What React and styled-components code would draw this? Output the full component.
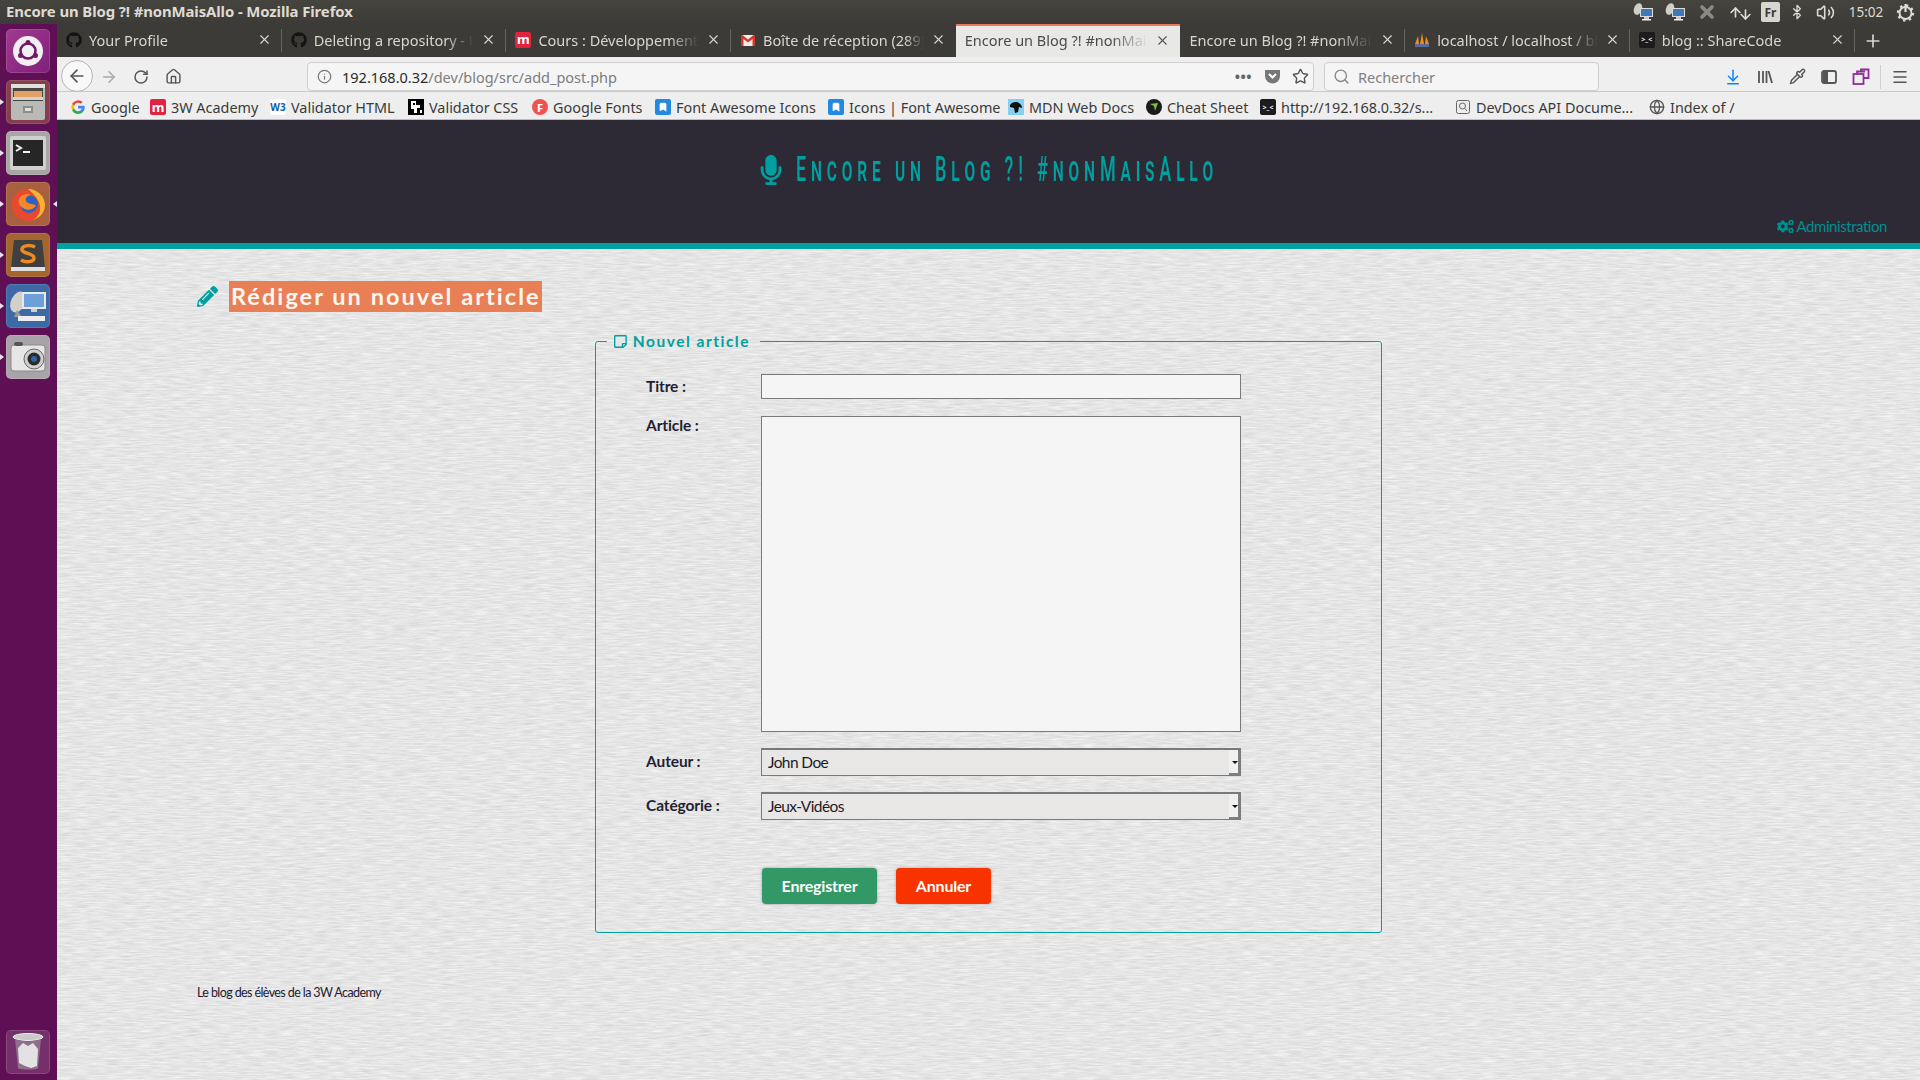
import React from "react";
import styled, { createGlobalStyle } from "styled-components";
import { FaGithub, FaMicrophone, FaPencilAlt, FaCogs, FaRegStickyNote } from "react-icons/fa";
import {
  ArrowLeft, ArrowRight, RotateCw, Home, Info, Star, Search, ArrowDownToLine, Pipette,
  Menu, Bluetooth, Volume2, X, Plus, Globe, ArrowUp, ArrowDown, Bookmark,
} from "lucide-react";

const UI = '"Noto Sans", "Open Sans", sans-serif';
const BODY = 'Lato, Roboto, sans-serif';

const paper =
  "data:image/svg+xml," +
  encodeURIComponent(
    `<svg xmlns='http://www.w3.org/2000/svg' width='512' height='512'><filter id='p' x='0' y='0' width='100%' height='100%' color-interpolation-filters='sRGB'><feTurbulence type='fractalNoise' baseFrequency='0.0625 0.7' numOctaves='3' stitchTiles='stitch'/><feColorMatrix values='0.16 0 0 0 0.82 0.16 0 0 0 0.82 0.16 0 0 0 0.82 0 0 0 0 1'/></filter><rect width='512' height='512' filter='url(#p)'/></svg>`
  );

const Global = createGlobalStyle`
  html, body { margin: 0; padding: 0; height: 100%; overflow: hidden; }
  body { font-family: ${UI}; background: #e6e6e6; }
  * { box-sizing: border-box; }
`;

const Screen = styled.div`
  width: 1920px;
  height: 1080px;
  display: flex;
  flex-direction: column;
  overflow: hidden;
`;

const TitleBar = styled.div`
  height: 24px;
  flex: none;
  display: flex;
  align-items: center;
  padding: 0 5px 0 6px;
  background: linear-gradient(#45443f, #3c3b37);
  color: #dfdbd2;
`;
const WindowTitle = styled.div`
  flex: 1;
  font-size: 14.9px;
  font-weight: 700;
  letter-spacing: -0.1px;
  white-space: nowrap;
  padding-bottom: 2px;
`;
const Tray = styled.div`
  display: flex;
  align-items: center;
  color: #dfdbd2;
`;
const TraySlot = styled.span`
  display: flex;
  align-items: center;
  justify-content: center;
  width: ${(p) => p.$w}px;
  margin-right: ${(p) => p.$gap || 0}px;
  font-size: 13.5px;
  & svg { flex: none; }
`;
const FrBox = styled.span`
  width: 19px;
  height: 20px;
  background: #d9d6cf;
  color: #3c3b37;
  border-radius: 2px;
  font: 700 12px ${UI};
  display: flex;
  align-items: center;
  justify-content: center;
`;

const Desktop = styled.div`
  flex: 1;
  display: flex;
  min-height: 0;
`;

const Launcher = styled.div`
  width: 57px;
  flex: none;
  background: #5f0f54;
  padding: 5px 0 6px 6px;
  display: flex;
  flex-direction: column;
  gap: 7px;
`;
const LauncherTile = styled.div`
  position: relative;
  width: 44px;
  height: 44px;
  border-radius: 5px;
  background: ${(p) => p.$bg};
  margin-top: ${(p) => (p.$bottom ? "auto" : "0")};
  box-shadow: inset 0 0 0 1px rgba(255, 255, 255, 0.12);
  display: flex;
  align-items: center;
  justify-content: center;
  ${(p) =>
    p.$running &&
    `&::before { content: ""; position: absolute; left: -6px; top: 19px; border: 3px solid transparent; border-left: 4px solid #e6e6e6; }`}
  ${(p) =>
    p.$focused &&
    `&::after { content: ""; position: absolute; right: -7px; top: 19px; border: 3px solid transparent; border-right: 4px solid #e6e6e6; }`}
`;

const Browser = styled.div`
  flex: 1;
  min-width: 0;
  display: flex;
  flex-direction: column;
`;

const TabStrip = styled.div`
  height: 33px;
  flex: none;
  display: flex;
  background: #3c3b37;
`;
const Tab = styled.div`
  flex: 0 0 224.7px;
  min-width: 0;
  height: 33px;
  display: flex;
  align-items: center;
  gap: 7px;
  padding: 0 10px ${(p) => (p.$active ? "3px" : "2px")} 9px;
  font-size: 14.5px;
  color: ${(p) => (p.$active ? "#4b4b4b" : "#d8d6cd")};
  background: ${(p) => (p.$active ? "#e8e8e7" : "transparent")};
  border-top: ${(p) => (p.$active ? "2px solid #e87b52" : "none")};
  position: relative;
  & > svg { flex: none; }
  ${(p) =>
    !p.$active &&
    !p.$noLine &&
    `&::after { content: ""; position: absolute; right: 0; top: 5px; bottom: 5px; width: 1px; background: #66655f; }`}
`;
const TabLabel = styled.span`
  flex: 1;
  min-width: 0;
  white-space: nowrap;
  overflow: hidden;
  -webkit-mask-image: linear-gradient(90deg, #000 ${(p) => p.$fade}%, transparent 100%);
  mask-image: linear-gradient(90deg, #000 ${(p) => p.$fade}%, transparent 100%);
`;
const TabClose = styled.span`
  display: flex;
  flex: none;
  color: ${(p) => (p.$active ? "#555" : "#d8d6cd")};
`;
const NewTab = styled.div`
  width: 36px;
  flex: none;
  display: flex;
  align-items: center;
  justify-content: center;
  color: #d8d6cd;
`;

const NavBar = styled.div`
  height: 35px;
  flex: none;
  display: flex;
  align-items: center;
  padding-top: 5px;
  background: #efefef;
  border-bottom: 1px solid #c9c9c9;
  color: #555;
`;
const BackCircle = styled.div`
  width: 32px;
  height: 32px;
  border-radius: 50%;
  margin-left: 4px;
  margin-top: -2px;
  border: 1px solid #b4b4b4;
  background: #f8f8f8;
  display: flex;
  align-items: center;
  justify-content: center;
  flex: none;
`;
const NavSlot = styled.div`
  width: 32px;
  flex: none;
  display: flex;
  justify-content: center;
  color: ${(p) => p.$color || "#555"};
`;
const UrlBox = styled.div`
  width: 1007px;
  height: 29px;
  margin-left: 118px;
  background: #f5f5f5;
  border: 1px solid #cfcfcf;
  border-radius: 4px;
  display: flex;
  align-items: center;
  padding: 0 4px 0 9px;
  flex: none;
  font-size: 14.5px;
`;
const UrlHost = styled.span`
  color: #2b2b2b;
  margin-left: 10px;
`;
const UrlPath = styled.span`
  color: #7d7d7d;
  flex: 1;
`;
const Dots = styled.span`
  color: #666;
  font-weight: 700;
  font-size: 14px;
  letter-spacing: 0.5px;
  margin-right: 12px;
  line-height: 1;
`;
const SearchBox = styled.div`
  width: 275px;
  height: 29px;
  margin-left: 10px;
  background: #f5f5f5;
  border: 1px solid #cfcfcf;
  border-radius: 4px;
  display: flex;
  align-items: center;
  gap: 8px;
  padding: 0 8px;
  flex: none;
  font-size: 14.5px;
  color: #808080;
`;
const ToolGroup = styled.div`
  margin-left: 118px;
  display: flex;
  align-items: center;
  flex: none;
`;
const ToolDivider = styled.div`
  width: 1px;
  height: 24px;
  background: #cfcfcf;
  margin: 0 3px 0 3px;
`;

const Bookmarks = styled.div`
  height: 28px;
  flex: none;
  display: flex;
  align-items: center;
  padding: 3px 0 0 13px;
  background: #eeeeee;
  border-bottom: 1px solid #bdbdbd;
  font-size: 14.4px;
  color: #3a3a3a;
`;
const BookmarkItem = styled.div`
  width: ${(p) => p.$w}px;
  flex: none;
  display: flex;
  align-items: center;
  gap: 5px;
  white-space: nowrap;
`;
const FavTile = styled.span`
  width: 16px;
  height: 16px;
  flex: none;
  display: flex;
  align-items: center;
  justify-content: center;
  background: ${(p) => p.$bg || "transparent"};
  color: ${(p) => p.$fg || "#fff"};
  border-radius: ${(p) => (p.$round ? "50%" : "2px")};
  font: 700 ${(p) => p.$size || 11}px/1 ${UI};
  overflow: hidden;
`;

const Page = styled.div`
  flex: 1;
  min-height: 0;
  display: flex;
  flex-direction: column;
  background-color: #e6e6e6;
  background-image: url("${paper}");
`;
const Header = styled.header`
  height: 129px;
  flex: none;
  background: #2d2a35;
  border-bottom: 6px solid #00a0a0;
  display: flex;
  flex-direction: column;
`;
const SiteTitle = styled.h1`
  margin: 32px 0 0;
  height: 36px;
  display: flex;
  align-items: center;
  justify-content: center;
  gap: 10px;
  padding-right: 4px;
  color: #00a0a0;
  white-space: nowrap;
  font-weight: 400;
`;
const SiteTitleText = styled.span`
  display: inline-block;
  width: 422px;
  font: 500 35px/36px Roboto, sans-serif;
  font-variant: small-caps;
  letter-spacing: 9.4px;
  transform: scaleX(0.515);
  transform-origin: left center;
`;
const AdminLink = styled.a`
  margin-top: auto;
  margin-bottom: 7px;
  align-self: flex-end;
  margin-right: 33px;
  display: flex;
  align-items: center;
  gap: 3px;
  font: 400 15px/20px ${BODY};
  letter-spacing: -0.45px;
  color: #008f8f;
`;

const Content = styled.main`
  flex: 1;
  padding: 32px 0 0 140px;
`;
const Heading = styled.h2`
  margin: 0;
  height: 31px;
  display: flex;
  align-items: center;
  gap: 11px;
  color: #00a0a0;
  font-weight: 400;
`;
const HeadingMark = styled.span`
  background: #e97f55;
  color: #fbf6f0;
  height: 31px;
  width: 313px;
  padding-left: 2px;
  font: 700 23.5px/30px ${BODY};
  letter-spacing: 2.05px;
  white-space: nowrap;
  overflow: hidden;
`;
const PostFieldset = styled.fieldset`
  width: 787px;
  height: 602px;
  margin: 19px 0 0 398px;
  padding: 23px 0 0 50px;
  border: 1px solid #00a0a0;
  border-radius: 3px;
  min-width: 0;
`;
const PostLegend = styled.legend`
  margin-left: -39px;
  padding: 0 10px 0 7px;
  height: 20px;
  width: 153px;
  display: flex;
  align-items: center;
  gap: 6px;
  color: #00a0a0;
  font: 700 15.5px/20px ${BODY};
  letter-spacing: 1.5px;
  white-space: nowrap;
`;
const FormRow = styled.div`
  display: flex;
  align-items: ${(p) => (p.$top ? "flex-start" : "center")};
  margin-top: ${(p) => p.$mt || 0}px;
`;
const FieldLabel = styled.label`
  width: 115px;
  flex: none;
  font: 700 15.5px/22px ${BODY};
  letter-spacing: -0.1px;
  color: #241f33;
  white-space: nowrap;
  padding-bottom: ${(p) => (p.$top ? "0" : "2px")};
  margin-top: ${(p) => (p.$top ? "-2px" : "0")};
`;
const TextInput = styled.input`
  width: 480px;
  height: 25px;
  border: 1px solid #7a7a7a;
  background: #f5f5f5;
  padding: 0 5px;
  outline: none;
`;
const TextArea = styled.textarea`
  width: 480px;
  height: 316px;
  border: 1px solid #7a7a7a;
  background: #f5f5f5;
  padding: 5px;
  outline: none;
  resize: none;
  display: block;
`;
const SelectWrap = styled.div`
  position: relative;
  width: 480px;
  height: 28px;
  &::before {
    content: "";
    position: absolute;
    right: 1px;
    top: 2px;
    bottom: 1px;
    width: 9px;
    background: #f0f0ee;
    border-right: 2px solid #7f7f7f;
    border-bottom: 2px solid #7f7f7f;
  }
  &::after {
    content: "";
    position: absolute;
    right: 3px;
    top: 13px;
    border: 3px solid transparent;
    border-top: 3px solid #111;
    border-bottom: 0;
  }
`;
const SelectField = styled.select`
  width: 100%;
  height: 100%;
  appearance: none;
  border: 1px solid #7a7a7a;
  border-top-width: 2px;
  border-radius: 0;
  background: #e8e7e5;
  padding: 0 0 2px 6px;
  font: 400 15.5px ${BODY};
  letter-spacing: -0.6px;
  color: #1d1b26;
  outline: none;
`;
const ButtonRow = styled.div`
  display: flex;
  gap: 19px;
  margin: 48px 0 0 116px;
`;
const FormButton = styled.button`
  height: 36px;
  width: ${(p) => p.$w}px;
  border: none;
  border-radius: 4px;
  background: ${(p) => p.$bg};
  color: #fdfdfa;
  font: 700 16px ${BODY};
  letter-spacing: -0.2px;
  box-shadow: 0 0 3px rgba(0, 0, 0, 0.3);
  padding: 0 0 2px;
`;
const Footer = styled.footer`
  margin-top: 51px;
  font: 400 12.5px/18px ${BODY};
  letter-spacing: -0.6px;
  color: #1e1a33;
`;

const MTile = () => <FavTile $bg="#e2233f" $size={13}>m</FavTile>;
const FlagTile = () => (
  <FavTile $bg="#2288e0">
    <Bookmark size={10} color="#fff" fill="#fff" />
  </FavTile>
);
const FaceTile = () => (
  <FavTile $bg="#1c1c1c" $size={7}>{">_<"}</FavTile>
);

const Gmail = () => (
  <svg width="16" height="16" viewBox="0 0 16 16">
    <rect x="1" y="3" width="14" height="11" fill="#eee" />
    <path d="M1 3v11h2.5V7L8 10.5 12.5 7v7H15V3h-1.5L8 7.5 2.5 3z" fill="#d5382c" />
  </svg>
);
const Pma = () => (
  <svg width="16" height="16" viewBox="0 0 16 16">
    <path d="M1 12 4 4l1 8zM6 12l2-11 2 11zM11 12 12 4l3 8z" fill="#e89020" />
    <rect x="1" y="12" width="14" height="3" fill="#5a6a9a" />
  </svg>
);
const GoogleG = () => (
  <svg width="16" height="16" viewBox="0 0 24 24">
    <path fill="#4285f4" d="M22 12.2c0-.7-.1-1.400-.2-2H12v4h5.600a4.800 4.800 0 0 1-2.100 3.100v2.600h3.400c2-1.800 3.100-4.500 3.100-7.700z" />
    <path fill="#34a853" d="M12 22.500c2.800 0 5.200-.9 6.900-2.600l-3.400-2.600c-.9.600-2.100 1-3.500 1-2.700 0-5-1.800-5.800-4.300H3.200v2.700A10.500 10.500 0 0 0 12 22.500z" />
    <path fill="#fbbc05" d="M6.200 14a6.300 6.300 0 0 1 0-4V7.300H3.200a10.500 10.500 0 0 0 0 9.400z" />
    <path fill="#ea4335" d="M12 5.700c1.500 0 2.900.5 4 1.600l3-3A10.500 10.500 0 0 0 3.200 7.300L6.200 10C7 7.500 9.300 5.700 12 5.700z" />
  </svg>
);
const QrMark = () => (
  <svg width="16" height="16" viewBox="0 0 16 16">
    <rect width="16" height="16" fill="#000" />
    <path d="M3 2h5v4h4v3H9v5H6v-4H3z" fill="#fff" />
    <rect x="5" y="4" width="2" height="2" />
    <rect x="12" y="11" width="2" height="3" fill="#fff" />
  </svg>
);
const MdnMark = () => (
  <svg width="16" height="16" viewBox="0 0 16 16">
    <rect width="16" height="16" fill="#83d0f2" />
    <path d="M2 6c2-3 6-4 9-2 2 1 3 3 3 5l-3-1-1 5-3 1-1-5-4-1z" fill="#111" />
  </svg>
);
const CheatMark = () => (
  <svg width="16" height="16" viewBox="0 0 16 16">
    <circle cx="8" cy="8" r="8" fill="#1b1b1b" />
    <path d="M4 5l8-1-3 8-1-5z" fill="#7fbf3f" />
  </svg>
);
const DocsMark = () => (
  <svg width="16" height="16" viewBox="0 0 16 16" fill="none" stroke="#666">
    <rect x="1.500" y="1.500" width="13" height="13" rx="2" fill="#eee" />
    <circle cx="7.500" cy="7" r="3" />
    <path d="M10 9.500l2 2.500" />
  </svg>
);
const Monitor = () => (
  <svg width="22" height="20" viewBox="0 0 22 20">
    <ellipse cx="6" cy="7" rx="4" ry="6" fill="#cfcfc8" transform="rotate(20 6 7)" />
    <rect x="8" y="6" width="13" height="9" fill="#dcdcd8" />
    <rect x="9" y="7" width="11" height="7" fill="#3f78b8" />
    <rect x="12" y="15" width="5" height="2" fill="#c8c8c4" />
    <rect x="10" y="17" width="9" height="1.500" fill="#eee" />
  </svg>
);
const SwapArrows = () => (
  <>
    <ArrowUp size={15} strokeWidth={2.6} style={{ marginRight: -5 }} />
    <ArrowDown size={15} strokeWidth={2.6} style={{ marginTop: 4 }} />
  </>
);
const SessionGear = () => (
  <svg width="19" height="19" viewBox="0 0 19 19" fill="none" stroke="#dfdbd2">
    <circle cx="9.500" cy="10" r="6" strokeWidth="2" />
    <circle cx="9.500" cy="10" r="7.500" strokeWidth="2.400" strokeDasharray="2.400 3.500" />
    <path d="M9.500 1v8" strokeWidth="2.200" stroke="#dfdbd2" />
  </svg>
);
const LibraryGlyph = () => (
  <svg width="18" height="18" viewBox="0 0 18 18" stroke="#555" strokeWidth="1.800" fill="none">
    <path d="M3 3v12M7 3v12M10.500 3v12M12.500 3l3.500 12" />
  </svg>
);
const SidebarGlyph = () => (
  <svg width="18" height="18" viewBox="0 0 18 18" fill="none" stroke="#555" strokeWidth="1.800">
    <rect x="2" y="3" width="14" height="12" rx="2" />
    <rect x="3" y="4" width="5" height="10" fill="#555" stroke="none" />
  </svg>
);
const SyncGlyph = () => (
  <svg width="18" height="18" viewBox="0 0 18 18" fill="none" stroke="#8e2f97" strokeWidth="1.800">
    <rect x="1.500" y="6" width="10" height="10" />
    <path d="M5 6V3.500h8" />
    <path d="M9 3V1.500h7.500V10H12" />
  </svg>
);

const UbuntuIcon = () => (
  <svg width="38" height="38" viewBox="0 0 38 38">
    <circle cx="19" cy="19" r="15" fill="#f3eef2" />
    <circle cx="19" cy="19" r="7.500" fill="none" stroke="#6e1a66" strokeWidth="2.600" />
    <circle cx="19" cy="10.500" r="2.500" fill="#6e1a66" />
    <circle cx="11.500" cy="23.500" r="2.500" fill="#6e1a66" />
    <circle cx="26.500" cy="23.500" r="2.500" fill="#6e1a66" />
  </svg>
);
const FilesIcon = () => (
  <svg width="36" height="40" viewBox="0 0 36 40">
    <rect x="1" y="2" width="34" height="36" rx="2" fill="#b9b9b6" />
    <rect x="1" y="2" width="34" height="4" fill="#e0e0dc" />
    <rect x="3" y="6" width="30" height="13" fill="#474643" />
    <rect x="4" y="9" width="28" height="6" fill="#e5a066" />
    <rect x="3" y="15" width="30" height="3" fill="#d3d3d0" />
    <rect x="13" y="24" width="10" height="7" fill="#8c8c89" />
    <rect x="15" y="26" width="6" height="3" fill="#e0e0dc" />
  </svg>
);
const TerminalIcon = () => (
  <svg width="38" height="36" viewBox="0 0 38 36">
    <rect x="1" y="1" width="36" height="34" rx="2" fill="#d0d0ce" />
    <rect x="4" y="5" width="30" height="26" fill="#262626" />
    <path d="M7 10l5 3-5 3" fill="none" stroke="#f0f0f0" strokeWidth="2" />
    <rect x="14" y="16" width="7" height="2" fill="#f0f0f0" />
  </svg>
);
const FirefoxIcon = () => (
  <svg width="38" height="38" viewBox="0 0 38 38">
    <circle cx="19" cy="20" r="16" fill="#e84a2f" />
    <path d="M19 4c9 0 17 7 17 16 0 7-5 13-12 15 5-3 8-8 7-14-1-6-5-11-12-17z" fill="#f9b233" />
    <circle cx="20" cy="19" r="9" fill="#2f62c0" />
    <path d="M10 14c3-5 8-6 12-4-4 1-6 3-5 6 2 4 8 2 10 5-3 4-9 5-13 2-4-2-5-6-4-9z" fill="#f5872a" />
  </svg>
);
const SublimeIcon = () => (
  <svg width="38" height="36" viewBox="0 0 38 36">
    <path d="M5 3h28l3 28H2z" fill="#3f3f3f" />
    <rect x="2" y="30" width="34" height="4" fill="#e0e0e0" />
    <path d="M26 10c-6-3-14-1-13 3 1 4 12 3 12 8 0 4-8 5-13 2" fill="none" stroke="#ee8a1f" strokeWidth="3.500" />
  </svg>
);
const RemoteIcon = () => (
  <svg width="40" height="36" viewBox="0 0 40 36">
    <ellipse cx="10" cy="14" rx="7" ry="11" fill="#d2d0c8" transform="rotate(25 10 14)" />
    <path d="M9 22l-3 7h8z" fill="#9a9a96" />
    <rect x="14" y="4" width="24" height="17" fill="#e8e8e8" />
    <rect x="16" y="6" width="20" height="13" fill="#6d9fd8" />
    <rect x="23" y="21" width="6" height="3" fill="#cfcfcf" />
    <rect x="10" y="28" width="27" height="5" fill="#ededed" />
  </svg>
);
const CameraIcon = () => (
  <svg width="38" height="32" viewBox="0 0 38 32">
    <rect x="2" y="4" width="34" height="26" rx="3" fill="#e6e6e6" stroke="#8c8c8c" />
    <rect x="5" y="1" width="9" height="4" rx="2" fill="#555" />
    <circle cx="25" cy="18" r="10" fill="#cfcfcf" stroke="#666" />
    <circle cx="25" cy="18" r="6.500" fill="#2a2a2a" />
    <circle cx="25" cy="18" r="3" fill="#2f62a8" />
  </svg>
);
const TrashIcon = () => (
  <svg width="32" height="40" viewBox="0 0 32 40">
    <ellipse cx="16" cy="5" rx="15" ry="3.500" fill="#c9c9c9" stroke="#eee" />
    <path d="M3 7l3 29c0 2 20 2 20 0l3-29c-6 3-20 3-26 0z" fill="#8f6f8d" />
    <path d="M6 16l5-5 5 3 5-3 5 6-1 17-6 2-6-2-6-3z" fill="#e2e2e2" />
  </svg>
);

const tabs = [
  { title: "Your Profile", icon: <FaGithub size={16} color="#141414" /> },
  { title: "Deleting a repository - User Documentation", icon: <FaGithub size={16} color="#141414" />, fade: 82 },
  { title: "Cours : Développement Web", icon: <MTile />, fade: 82 },
  { title: "Boîte de réception (289) - Gmail", icon: <Gmail />, noLine: true, fade: 88 },
  { title: "Encore un Blog ?! #nonMaisAllo", active: true, fade: 80 },
  { title: "Encore un Blog ?! #nonMaisAllo", fade: 80 },
  { title: "localhost / localhost / blog", icon: <Pma />, fade: 82 },
  { title: "blog :: ShareCode", icon: <FaceTile /> },
];

const marks = [
  { w: 80, label: "Google", icon: <GoogleG /> },
  { w: 120, label: "3W Academy", icon: <MTile /> },
  { w: 138, label: "Validator HTML", icon: <FavTile $bg="#fff" $fg="#0b5ea8" $size={10}>W3</FavTile> },
  { w: 124, label: "Validator CSS", icon: <QrMark /> },
  { w: 123, label: "Google Fonts", icon: <FavTile $bg="#f05252" $round>F</FavTile> },
  { w: 173, label: "Font Awesome Icons", icon: <FlagTile /> },
  { w: 180, label: "Icons | Font Awesome", icon: <FlagTile /> },
  { w: 138, label: "MDN Web Docs", icon: <MdnMark /> },
  { w: 114, label: "Cheat Sheet", icon: <CheatMark /> },
  { w: 195, label: "http://192.168.0.32/s...", icon: <FaceTile /> },
  { w: 194, label: "DevDocs API Docume...", icon: <DocsMark /> },
  { w: 100, label: "Index of /", icon: <Globe size={16} color="#555" /> },
];

const launcherItems = [
  { bg: "linear-gradient(135deg,#a03a90,#80207a)", icon: <UbuntuIcon /> },
  { bg: "#85404f", icon: <FilesIcon />, running: true },
  { bg: "#a9a6a6", icon: <TerminalIcon />, running: true },
  { bg: "#a9603f", icon: <FirefoxIcon />, running: true, focused: true },
  { bg: "#a4652f", icon: <SublimeIcon />, running: true },
  { bg: "#3d69a6", icon: <RemoteIcon />, running: true },
  { bg: "#a9a2a8", icon: <CameraIcon />, running: true },
];

export default function App() {
  return (
    <Screen>
      <Global />
      <TitleBar>
        <WindowTitle>Encore un Blog ?! #nonMaisAllo - Mozilla Firefox</WindowTitle>
        <Tray>
          <TraySlot $w={22} $gap={10}><Monitor /></TraySlot>
          <TraySlot $w={22} $gap={12}><Monitor /></TraySlot>
          <TraySlot $w={18} $gap={14}><X size={20} strokeWidth={4.500} color="#8a8984" /></TraySlot>
          <TraySlot $w={20} $gap={11}><SwapArrows /></TraySlot>
          <TraySlot $w={19} $gap={12}><FrBox>Fr</FrBox></TraySlot>
          <TraySlot $w={10} $gap={13}><Bluetooth size={16} /></TraySlot>
          <TraySlot $w={21} $gap={12}><Volume2 size={19} /></TraySlot>
          <TraySlot $w={36} $gap={12}>15:02</TraySlot>
          <TraySlot $w={19}><SessionGear /></TraySlot>
        </Tray>
      </TitleBar>
      <Desktop>
        <Launcher>
          {launcherItems.map((it, i) => (
            <LauncherTile key={i} $bg={it.bg} $running={it.running} $focused={it.focused}>
              {it.icon}
            </LauncherTile>
          ))}
          <LauncherTile $bg="rgba(255,255,255,0.14)" $bottom>
            <TrashIcon />
          </LauncherTile>
        </Launcher>
        <Browser>
          <TabStrip>
            {tabs.map((t, i) => (
              <Tab key={i} $active={t.active} $noLine={t.noLine || t.active}>
                {t.icon}
                <TabLabel $fade={t.fade || 100}>{t.title}</TabLabel>
                <TabClose $active={t.active}>
                  <X size={15} strokeWidth={1.800} />
                </TabClose>
              </Tab>
            ))}
            <NewTab>
              <Plus size={20} strokeWidth={2} />
            </NewTab>
          </TabStrip>
          <NavBar>
            <BackCircle>
              <ArrowLeft size={20} color="#555" />
            </BackCircle>
            <NavSlot $color="#aaa"><ArrowRight size={18} /></NavSlot>
            <NavSlot><RotateCw size={16} strokeWidth={2.200} /></NavSlot>
            <NavSlot><Home size={17} /></NavSlot>
            <UrlBox>
              <Info size={15} color="#777" />
              <UrlHost>192.168.0.32</UrlHost>
              <UrlPath>/dev/blog/src/add_post.php</UrlPath>
              <Dots>•••</Dots>
              <svg width="17" height="17" viewBox="0 0 17 17" style={{ marginRight: 11 }}>
                <path d="M1 2h15v6a7.500 7.500 0 0 1-15 0z" fill="#777" />
                <path d="M5 6l3.500 3.500L12 6" fill="none" stroke="#fff" strokeWidth="2" />
              </svg>
              <Star size={17} color="#555" />
            </UrlBox>
            <SearchBox>
              <Search size={17} color="#8a8a8a" />
              Rechercher
            </SearchBox>
            <ToolGroup>
              <NavSlot $color="#0a84ff"><ArrowDownToLine size={18} /></NavSlot>
              <NavSlot><LibraryGlyph /></NavSlot>
              <NavSlot><Pipette size={17} /></NavSlot>
              <NavSlot><SidebarGlyph /></NavSlot>
              <NavSlot><SyncGlyph /></NavSlot>
              <ToolDivider />
              <NavSlot><Menu size={18} /></NavSlot>
            </ToolGroup>
          </NavBar>
          <Bookmarks>
            {marks.map((m) => (
              <BookmarkItem key={m.label} $w={m.w}>
                {m.icon}
                {m.label}
              </BookmarkItem>
            ))}
          </Bookmarks>
          <Page>
            <Header>
              <SiteTitle>
                <FaMicrophone size={30} />
                <SiteTitleText>Encore un Blog ?! #nonMaisAllo</SiteTitleText>
              </SiteTitle>
              <AdminLink>
                <FaCogs size={17} />
                Administration
              </AdminLink>
            </Header>
            <Content>
              <Heading>
                <FaPencilAlt size={21} />
                <HeadingMark>Rédiger un nouvel article</HeadingMark>
              </Heading>
              <PostFieldset>
                <PostLegend>
                  <FaRegStickyNote size={15} />
                  Nouvel article
                </PostLegend>
                <FormRow>
                  <FieldLabel>Titre :</FieldLabel>
                  <TextInput type="text" />
                </FormRow>
                <FormRow $top $mt={17}>
                  <FieldLabel $top>Article :</FieldLabel>
                  <TextArea />
                </FormRow>
                <FormRow $mt={16}>
                  <FieldLabel>Auteur :</FieldLabel>
                  <SelectWrap>
                    <SelectField defaultValue="John Doe">
                      <option>John Doe</option>
                    </SelectField>
                  </SelectWrap>
                </FormRow>
                <FormRow $mt={16}>
                  <FieldLabel>Catégorie :</FieldLabel>
                  <SelectWrap>
                    <SelectField defaultValue="Jeux-Vidéos">
                      <option>Jeux-Vidéos</option>
                    </SelectField>
                  </SelectWrap>
                </FormRow>
                <ButtonRow>
                  <FormButton type="button" $bg="#329966" $w={115}>Enregistrer</FormButton>
                  <FormButton type="button" $bg="#f83300" $w={95}>Annuler</FormButton>
                </ButtonRow>
              </PostFieldset>
              <Footer>Le blog des élèves de la 3W Academy</Footer>
            </Content>
          </Page>
        </Browser>
      </Desktop>
    </Screen>
  );
}
